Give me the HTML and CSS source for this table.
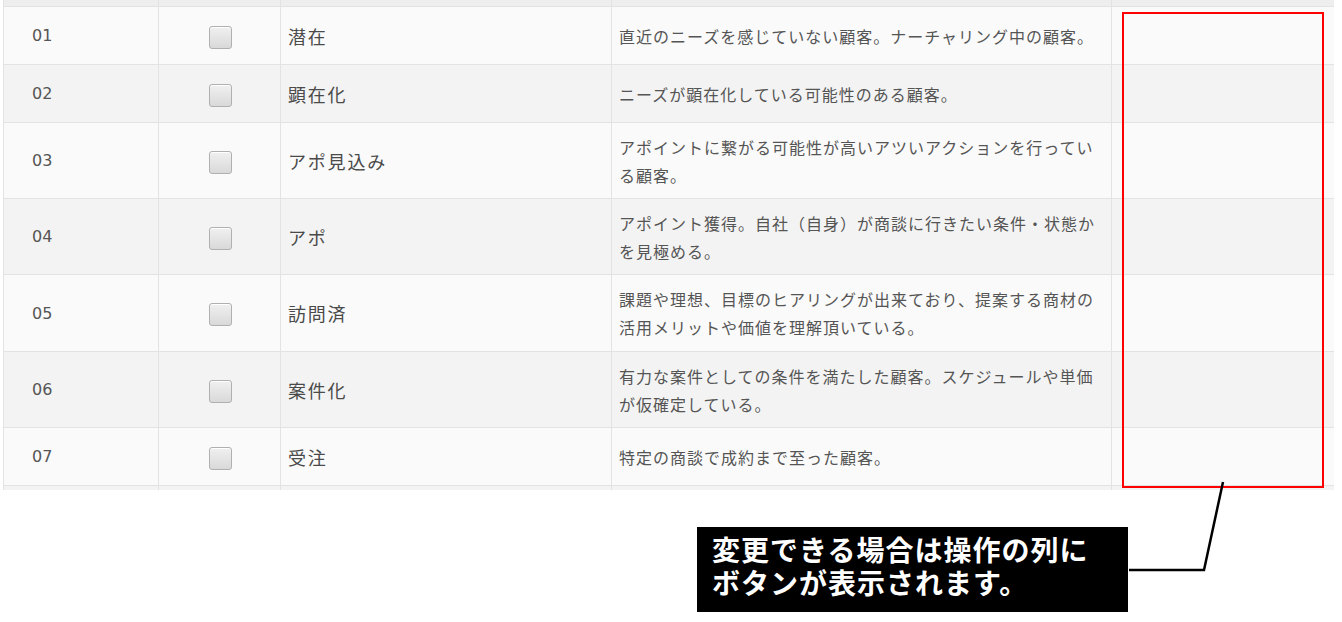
FILE: index.html
```html
<!DOCTYPE html>
<html lang="ja">
<head>
<meta charset="utf-8">
<title>ステータス一覧</title>
<link rel="stylesheet" href="styles.css">
</head>
<body>
<div class="page">
  <div class="table-wrap">
    <table class="grid">
      <colgroup>
        <col class="c-no"><col class="c-chk"><col class="c-name"><col class="c-desc"><col class="c-op">
      </colgroup>
      <thead>
        <tr class="head"><th></th><th></th><th></th><th></th><th></th></tr>
      </thead>
      <tbody>
        <tr class="odd"><td class="no">01</td><td class="chk"><span class="box"></span></td><td class="name">潜在</td><td class="desc">直近のニーズを感じていない顧客。ナーチャリング中の顧客。</td><td class="op"></td></tr>
        <tr class="even"><td class="no">02</td><td class="chk"><span class="box"></span></td><td class="name">顕在化</td><td class="desc">ニーズが顕在化している可能性のある顧客。</td><td class="op"></td></tr>
        <tr class="odd"><td class="no">03</td><td class="chk"><span class="box"></span></td><td class="name">アポ見込み</td><td class="desc">アポイントに繋がる可能性が高いアツいアクションを行っている顧客。</td><td class="op"></td></tr>
        <tr class="even"><td class="no">04</td><td class="chk"><span class="box"></span></td><td class="name">アポ</td><td class="desc">アポイント獲得。自社（自身）が商談に行きたい条件・状態かを見極める。</td><td class="op"></td></tr>
        <tr class="odd"><td class="no">05</td><td class="chk"><span class="box"></span></td><td class="name">訪問済</td><td class="desc desc-loose">課題や理想、目標のヒアリングが出来ており、提案する商材の活用メリットや価値を理解頂いている。</td><td class="op"></td></tr>
        <tr class="even"><td class="no">06</td><td class="chk"><span class="box"></span></td><td class="name">案件化</td><td class="desc">有力な案件としての条件を満たした顧客。スケジュールや単価が仮確定している。</td><td class="op"></td></tr>
        <tr class="odd"><td class="no">07</td><td class="chk"><span class="box"></span></td><td class="name">受注</td><td class="desc">特定の商談で成約まで至った顧客。</td><td class="op"></td></tr>
        <tr class="even"><td></td><td></td><td></td><td></td><td></td></tr>
      </tbody>
    </table>
  </div>

  <div class="highlight"></div>
  <svg class="connector" width="1342" height="622" viewBox="0 0 1342 622">
    <polyline points="1223,482 1204,570 1129,570" fill="none" stroke="#000" stroke-width="2.5"/>
  </svg>
  <div class="callout">
    <span class="callout-line">変更できる場合は操作の列に</span>
    <span class="callout-line">ボタンが表示されます。</span>
  </div>
</div>
</body>
</html>
```

FILE: styles.css
```css
html, body {
  margin: 0;
  padding: 0;
  background: #fff;
}

.page {
  position: relative;
  width: 1342px;
  height: 622px;
  overflow: hidden;
  font-family: "Noto Sans CJK JP", "DejaVu Sans", sans-serif;
}

.table-wrap {
  margin-left: 3px;
  width: 1331px;
  height: 490px;
  overflow: hidden;
}

.grid {
  border-collapse: collapse;
  table-layout: fixed;
  width: 1331px;
}

.c-no { width: 155px; }
.c-chk { width: 122px; }
.c-name { width: 331px; }
.c-desc { width: 500px; }
.c-op { width: 223px; }

.grid th,
.grid td {
  border: 1px solid #e3e3e3;
  padding: 0;
  vertical-align: middle;
}

.head th {
  height: 6px;
  background: #eeeeee;
  border-top: none;
}

.grid tbody tr {
  height: 58px;
}

.odd td { background: #fafafa; }
.even td { background: #f3f3f3; }

.no {
  padding-left: 28px !important;
  font-family: "DejaVu Sans", sans-serif;
  font-size: 16px;
  color: #555;
}

.chk {
  text-align: center;
}

.box {
  display: inline-block;
  width: 23px;
  height: 23px;
  box-sizing: border-box;
  border: 1px solid #b0b0b0;
  border-radius: 3px;
  background: linear-gradient(#f0f0f0, #d9d9d9);
  box-shadow: inset 0 1px 0 #fff;
  vertical-align: middle;
  margin-left: 1px;
}

.name {
  padding-left: 7px !important;
  font-size: 18px;
  letter-spacing: 1.8px;
  color: #4a4a4a;
}

.desc {
  padding: 10px 12px 9px 7px !important;
  font-size: 16px;
  letter-spacing: 1px;
  line-height: 28px;
  color: #555;
}

.desc-loose {
  padding-bottom: 10px !important;
}

.highlight {
  position: absolute;
  left: 1122px;
  top: 12px;
  width: 202px;
  height: 476px;
  box-sizing: border-box;
  border: 2px solid #ff0000;
}

.connector {
  position: absolute;
  left: 0;
  top: 0;
  pointer-events: none;
}

.callout {
  position: absolute;
  left: 697px;
  top: 527px;
  width: 431px;
  height: 85px;
  box-sizing: border-box;
  padding: 6px 10px 0 15px;
  background: #000;
  color: #fff;
  font-weight: bold;
  font-size: 28px;
  letter-spacing: 1px;
  white-space: nowrap;
}

.callout-line {
  display: block;
  height: 33px;
  line-height: 33px;
}
```
